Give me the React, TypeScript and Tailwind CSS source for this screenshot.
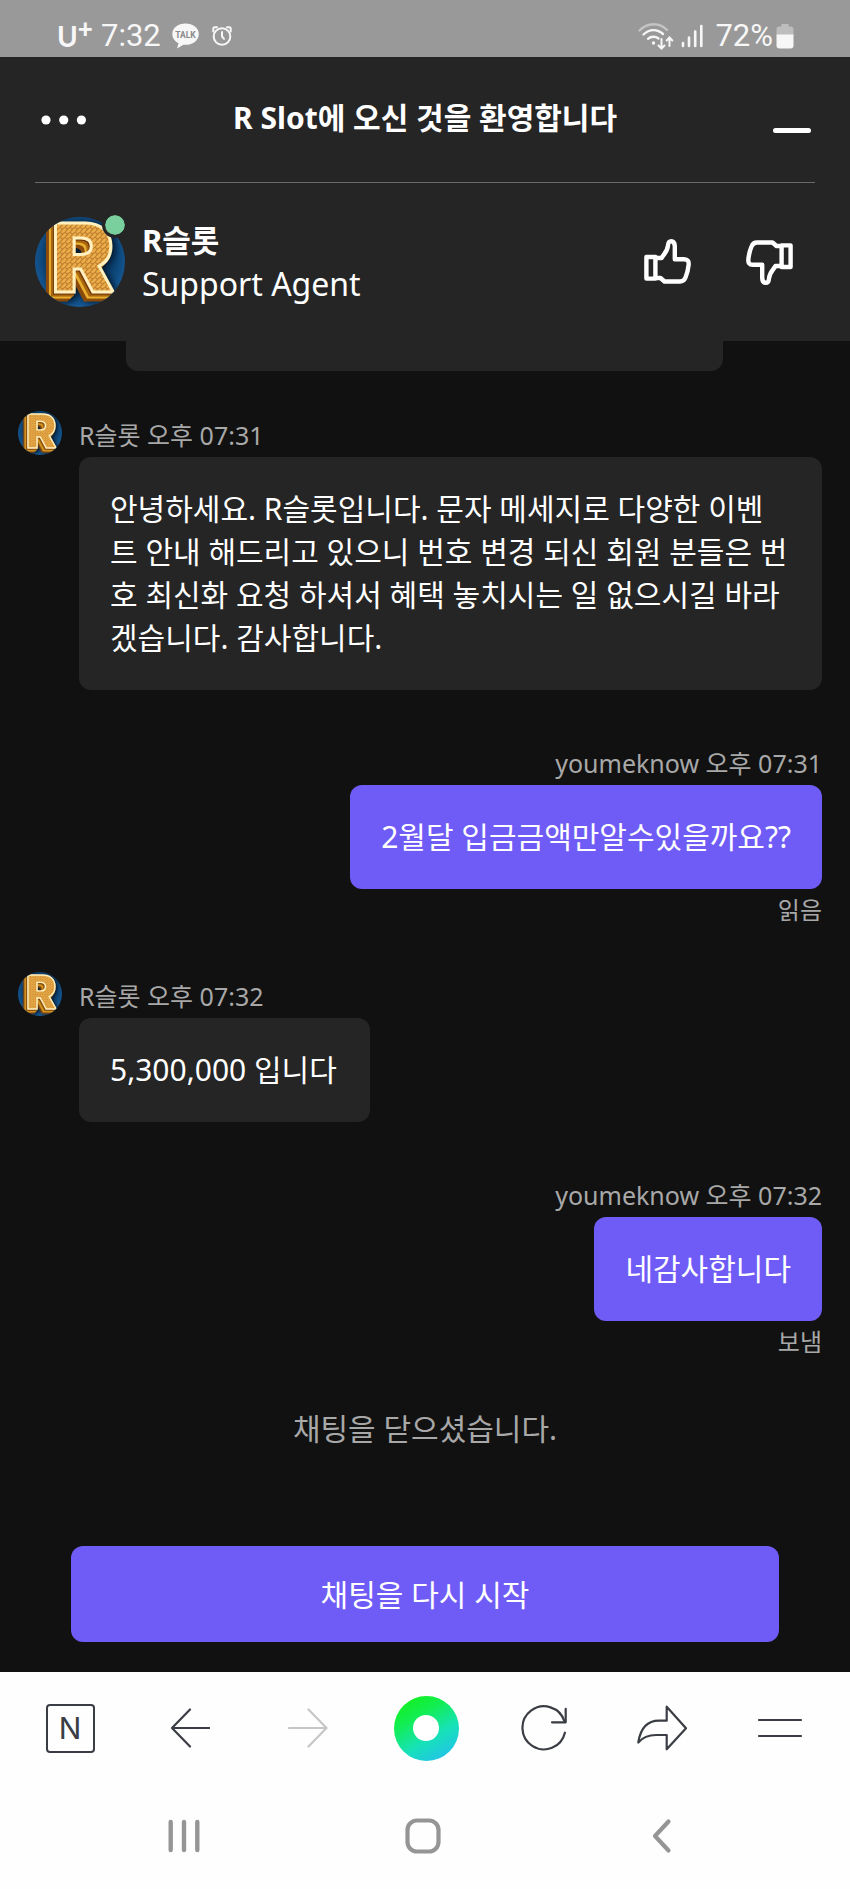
import type { ReactNode } from "react";

function Avatar({ id, className }: { id: string; className: string }) {
  return (
    <svg viewBox="0 0 90 90" className={`overflow-visible ${className}`} aria-hidden="true">
      <defs>
        <clipPath id={`${id}-clip`}>
          <circle cx="45" cy="45" r="45" />
        </clipPath>
        <radialGradient id={`${id}-bg`} cx="50%" cy="45%" r="55%">
          <stop offset="0" stopColor="#062a4c" />
          <stop offset="0.7" stopColor="#0b4272" />
          <stop offset="1" stopColor="#175a96" />
        </radialGradient>
        <pattern id={`${id}-face`} width="5" height="5" patternUnits="userSpaceOnUse">
          <rect width="5" height="5" fill="#eaad48" />
          <path d="M0 0L2.5 2.5L5 0M0 5L2.5 2.5" stroke="#bf7f30" strokeWidth="1.1" fill="none" />
        </pattern>
      </defs>
      <g clipPath={`url(#${id}-clip)`}>
        <rect width="90" height="90" fill={`url(#${id}-bg)`} />
        <g className="[filter:drop-shadow(-1px_1px_0_#6b3208)_drop-shadow(-2px_2px_0_#a8660f)_drop-shadow(-2px_2px_0_#e8ae2c)_drop-shadow(-3px_3px_0_#8a4a0c)_drop-shadow(3px_1px_3px_#04182c)]">
          <text
            x="16"
            y="75"
            fontSize="95"
            fill={`url(#${id}-face)`}
            stroke="#fff0bd"
            strokeWidth="3"
            className="font-['Inter','Liberation_Sans',sans-serif] font-black"
          >
            R
          </text>
        </g>
      </g>
    </svg>
  );
}

function Thumb({ className }: { className?: string }) {
  return (
    <svg
      viewBox="0 0 47 46"
      className={`h-[46px] w-[47px] ${className ?? ""}`}
      fill="none"
      stroke="currentColor"
      strokeWidth="4.4"
      strokeLinejoin="round"
      strokeLinecap="round"
      aria-hidden="true"
    >
      <path d="M2.4 18H11.4V39.600H2.4Z" />
      <path d="M13 19H17.5C20 15 23.5 12.500 24 6.500C24.300 3.300 25 2.200 27.200 2.200C29.600 2.200 30.600 4 30.800 7V20.200H40C44 20.200 45 22.500 44.600 26C44 31.500 43 35 41.500 38.500C40.300 41.500 39 42.500 36 42.500H20.500L16.500 39H13" />
    </svg>
  );
}

type MessageProps = {
  author: string;
  time: string;
  mine?: boolean;
  status?: string;
  avatarId?: string;
  children: ReactNode;
};

function Message({ author, time, mine, status, avatarId, children }: MessageProps) {
  return (
    <article className={mine ? "flex flex-col items-end pr-7 pl-20" : "flex items-start gap-[17px] pr-7 pl-[18px]"}>
      {avatarId && <Avatar id={avatarId} className="size-11 shrink-0" />}
      <div className={mine ? "flex flex-col items-end" : "flex min-w-0 flex-col items-start"}>
        <p className="pt-1.5 pb-1 text-[25px] leading-9 text-[#a8a8a8]">
          {author} {time}
        </p>
        <p
          className={`rounded-xl pt-[30px] pb-[31px] pl-[31px] text-[30px] leading-[43px] break-all text-white ${mine ? "bg-[#6f5cf6] pr-[31px]" : "bg-[#252525] pr-[33px]"}`}
        >
          {children}
        </p>
        {status && <p className="pt-2 text-[24px] leading-[26px] text-[#a8a8a8]">{status}</p>}
      </div>
    </article>
  );
}

function StatusBar() {
  return (
    <div className="flex h-[57px] items-center justify-between bg-[#999999] pr-14 pl-[57px] font-['Roboto',sans-serif] text-[31px] leading-9 text-[#f7f7f7]">
      <div className="flex items-center pt-3.5">
        <span className="flex w-11 items-start font-['Lato',sans-serif] text-[28px] leading-9 font-bold">
          U<sup className="top-0 text-[26px] leading-5 font-black">+</sup>
        </span>
        <span className="w-[71px]">7:32</span>
        <svg viewBox="0 0 27 26" className="mr-[13px] h-[26px] w-[27px]" aria-hidden="true">
          <path d="M13.500 0.500C6 0.500 0.300 5 0.300 11C0.300 15 3 18.500 6.500 20.300L5 25.500L11.500 21.800C21 22.500 26.800 17.500 26.800 11C26.800 5 21 0.500 13.500 0.500Z" fill="#f7f7f7" />
          <text x="13.5" y="14.5" fontSize="8.5" textAnchor="middle" fill="#8a8a8a" className="font-['Roboto',sans-serif] font-bold">
            TALK
          </text>
        </svg>
        <svg viewBox="0 0 20 20" className="size-5" fill="none" stroke="#f7f7f7" strokeWidth="2" strokeLinecap="round" aria-hidden="true">
          <circle cx="10" cy="10.500" r="8.300" />
          <path d="M10 6V10.500L12 12.800" />
          <path d="M1.300 5.500V2.500Q1.300 1.300 2.800 1.300H5M18.700 5.500V2.500Q18.700 1.300 17.200 1.300H15" />
        </svg>
      </div>
      <div className="flex items-center pt-3.5">
        <svg viewBox="0 0 36 28" className="mr-[7px] h-7 w-9" fill="none" stroke="#f7f7f7" strokeWidth="2.400" strokeLinecap="round" aria-hidden="true">
          <path d="M1.500 8.500C9.500 0.200 21.500 0.200 29 8" stroke="#c4c4c4" />
          <path d="M5.500 12.500C11.500 6.800 19 6.800 25 12" />
          <path d="M10 16.800C13 14.200 17.500 14.200 20.500 16.500" />
          <circle cx="15.500" cy="21" r="1.700" fill="#f7f7f7" stroke="none" />
          <path d="M23.500 17V26M20.500 23.500L23.500 26.500L26.500 23.500M31.500 24V16M28.700 18.500L31.500 15.500L34.300 18.500" strokeWidth="2" />
        </svg>
        <svg viewBox="0 0 22 24" className="mr-3 h-6 w-[22px]" stroke="#f7f7f7" strokeWidth="2.600" strokeLinecap="round" aria-hidden="true">
          <path d="M2 19V22M8 13.500V22M14.200 7.500V22M20.300 2V22" />
        </svg>
        <span className="mr-[3px]">72%</span>
        <svg viewBox="0 0 18 26" className="h-[26px] w-[18px]" aria-hidden="true">
          <path d="M5.500 1H12.500V3.500H15Q17.500 3.500 17.500 6.500V12H0.500V6.500Q0.500 3.500 3 3.500H5.500Z" fill="#bdbdbd" />
          <path d="M0.500 11.500H17.500V22.500Q17.500 25.500 14.500 25.500H3.500Q0.500 25.500 0.500 22.500Z" fill="#f7f7f7" />
        </svg>
      </div>
    </div>
  );
}

function Header() {
  return (
    <header className="bg-[#252525] px-[35px] text-white">
      <div className="flex h-[126px] items-center justify-between border-b border-[#6a6a6a]">
        <button aria-label="메뉴" className="flex w-16 justify-start pl-1.5">
          <svg viewBox="0 0 46 10" className="h-2.5 w-[46px]" fill="currentColor" aria-hidden="true">
            <circle cx="5" cy="5" r="4.600" />
            <circle cx="22.700" cy="5" r="4.600" />
            <circle cx="40.400" cy="5" r="4.600" />
          </svg>
        </button>
        <h1 className="pb-1 text-[30px] leading-10 font-bold">R Slot에 오신 것을 환영합니다</h1>
        <button aria-label="최소화" className="flex w-16 justify-end pt-[22px] pr-1">
          <span className="h-[5px] w-[38px] rounded-full bg-white" />
        </button>
      </div>
      <div className="flex h-[158px] items-center">
        <div className="relative mr-[17px]">
          <Avatar id="agent" className="size-[90px]" />
          <span className="absolute -top-0.5 right-0 size-5 rounded-full bg-[#79d09d] outline-3 outline-[#252525]" />
        </div>
        <div className="leading-[43px]">
          <p className="text-[31px] font-bold">R슬롯</p>
          <p className="text-[32px]">Support Agent</p>
        </div>
        <div className="ml-auto flex items-center gap-[55px] pr-[22px]">
          <button aria-label="좋아요">
            <Thumb />
          </button>
          <button aria-label="싫어요">
            <Thumb className="rotate-180" />
          </button>
        </div>
      </div>
    </header>
  );
}

const line = {
  fill: "none",
  stroke: "currentColor",
  strokeWidth: 2.2,
  strokeLinecap: "round",
  strokeLinejoin: "round",
  "aria-hidden": true,
} as const;

function BrowserBar() {
  return (
    <nav aria-label="브라우저" className="grid h-[110px] grid-cols-7 place-items-center pt-0.5 pr-[11px] pl-[13px] text-[#3b3d45]">
      <button
        aria-label="네이버 홈"
        className="mr-1 flex size-[49px] items-center justify-center rounded-[4px] border-2 border-current font-['Inter',sans-serif] text-[30px] leading-none"
      >
        N
      </button>
      <button aria-label="뒤로">
        <svg viewBox="0 0 40 40" className="size-10" {...line}>
          <path d="M39.500 20H2M20 1.500L2 20L20 38.500" />
        </svg>
      </button>
      <button aria-label="앞으로" className="text-[#c6c6c6]">
        <svg viewBox="0 0 40 40" className="size-10" {...line}>
          <path d="M1 20H38.500M20.500 1.500L38.500 20L20.500 38.500" />
        </svg>
      </button>
      <button
        aria-label="그린닷"
        className="flex size-[65px] items-center justify-center rounded-full bg-[linear-gradient(150deg,#14f01e_8%,#12ee50_32%,#16e2b8_62%,#27b8fa_100%)]"
      >
        <span className="size-[26px] rounded-full bg-white" />
      </button>
      <button aria-label="새로고침">
        <svg viewBox="0 0 48 48" className="size-12" {...line}>
          <path d="M44.900 28.700A21.500 21.500 0 1 1 44.500 17.500" />
          <path d="M45.700 4.900V18.300H32" />
        </svg>
      </button>
      <button aria-label="공유">
        <svg viewBox="0 0 50 48" className="h-12 w-[50px]" {...line}>
          <path d="M1.300 38.500C3.500 24 10.500 16.700 22 16.700H29.700V2.700L49 24.300L29.700 45.300V31H19C11.500 31 6 33 1.300 38.500Z" />
        </svg>
      </button>
      <button aria-label="메뉴 열기">
        <svg viewBox="0 0 46 20" className="h-5 w-[46px]" {...line}>
          <path d="M2 2H44M2 18H44" />
        </svg>
      </button>
    </nav>
  );
}

function SystemBar() {
  return (
    <nav aria-label="시스템" className="grid h-[107px] grid-cols-3 place-items-center pr-[69px] pl-[65px] text-[#959595]">
      <button aria-label="최근 앱">
        <svg viewBox="0 0 34 36" className="h-9 w-[34px]" {...line}>
          <path d="M3.700 4V32M17 4V32M30.300 4V32" strokeWidth="4.400" />
        </svg>
      </button>
      <button aria-label="홈">
        <svg viewBox="0 0 36 36" className="size-9" {...line}>
          <rect x="2.500" y="2.500" width="31" height="31" rx="9.500" strokeWidth="4.200" />
        </svg>
      </button>
      <button aria-label="이전">
        <svg viewBox="0 0 20 36" className="h-9 w-5" {...line}>
          <path d="M16.500 3.500L3 18L16.500 32.500" strokeWidth="4.200" />
        </svg>
      </button>
    </nav>
  );
}

export default function App() {
  return (
    <div className="flex min-h-screen flex-col bg-[#111111] font-['Noto_Sans','Noto_Sans_CJK_KR',sans-serif]">
      <StatusBar />
      <Header />
      <main className="flex flex-1 flex-col">
        <div className="mr-[127px] mb-10 ml-[126px] h-[30px] rounded-b-xl bg-[#252525]" />
        <div className="flex flex-col gap-[49px]">
          <Message author="R슬롯" time="오후 07:31" avatarId="first">
            안녕하세요. R슬롯입니다. 문자 메세지로 다양한 이벤트 안내 해드리고 있으니 번호 변경 되신 회원 분들은 번호 최신화 요청 하셔서 혜택 놓치시는 일 없으시길 바라겠습니다. 감사합니다.
          </Message>
          <Message author="youmeknow" time="오후 07:31" mine status="읽음">
            2월달 입금금액만알수있을까요??
          </Message>
          <Message author="R슬롯" time="오후 07:32" avatarId="second">
            5,300,000 입니다
          </Message>
          <Message author="youmeknow" time="오후 07:32" mine status="보냄">
            네감사합니다
          </Message>
          <p className="text-center text-[30px] leading-[50px] text-[#a8a8a8]">채팅을 닫으셨습니다.</p>
        </div>
        <div className="mt-auto px-[71px] pt-8 pb-[30px]">
          <button className="h-24 w-full rounded-xl bg-[#6f5cf6] text-[30px] text-white">채팅을 다시 시작</button>
        </div>
      </main>
      <footer className="bg-[#fefefe]">
        <BrowserBar />
        <SystemBar />
      </footer>
    </div>
  );
}
